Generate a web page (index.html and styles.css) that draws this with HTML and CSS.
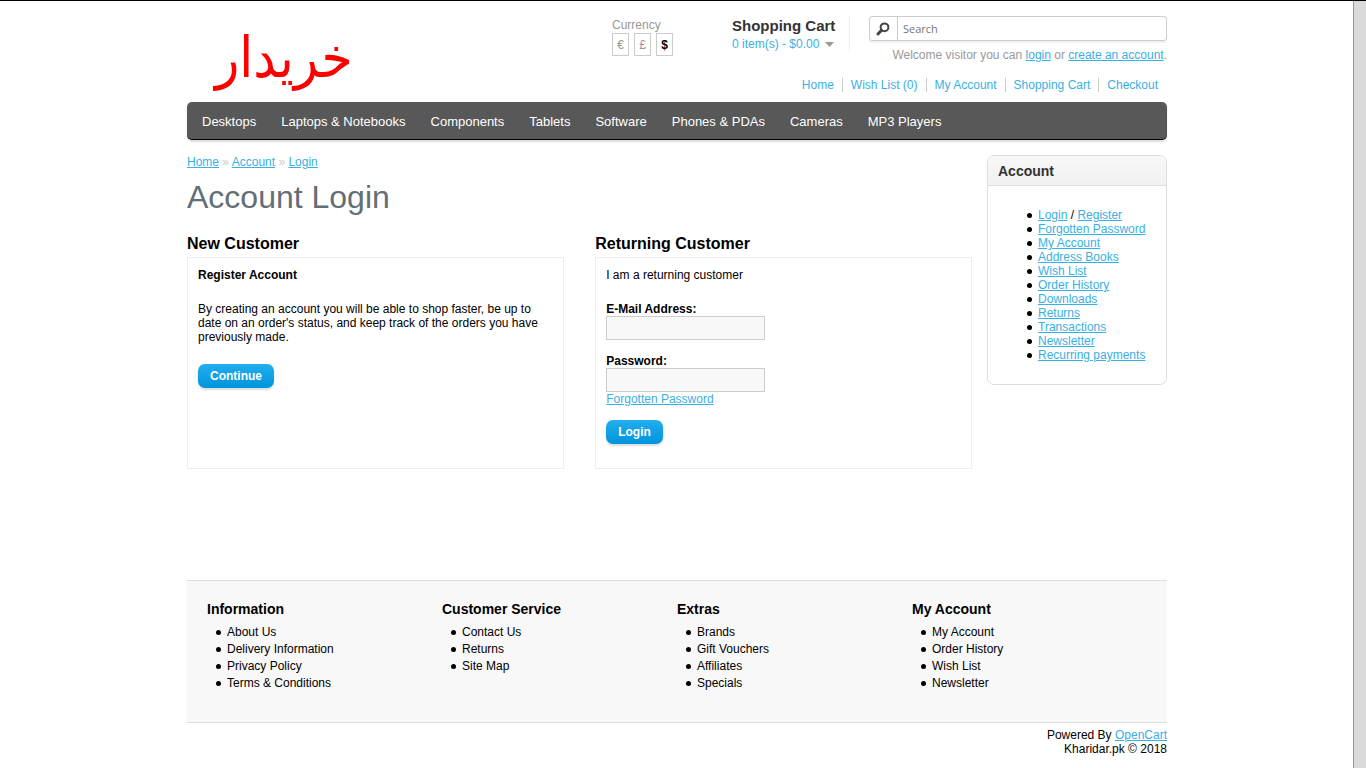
FILE: index.html
```html
<!DOCTYPE html>
<html lang="en">
<head>
<meta charset="utf-8">
<meta name="viewport" content="width=device-width, initial-scale=1">
<title>Account Login</title>
<link rel="stylesheet" href="styles.css">
</head>
<body>
<div class="viewport">
  <div class="container">
    <header class="header">
      <a class="logo" href="#" lang="ur" dir="rtl">خريدار</a>
      <form class="currency">
        <span class="currency-label">Currency</span>
        <div class="currency-options">
          <button type="button">€</button>
          <button type="button">£</button>
          <button type="button" class="active">$</button>
        </div>
      </form>
      <div class="cart">
        <h4>Shopping Cart</h4>
        <a href="#">0 item(s) - $0.00<svg class="caret" viewBox="0 0 9 5" aria-hidden="true"><path d="M0 0h9L4.500 5z" fill="#999"/></svg></a>
      </div>
      <div class="tools">
        <form class="search" role="search">
          <button type="button" aria-label="Search">
            <svg viewBox="0 0 14 14" aria-hidden="true"><circle cx="8.500" cy="5.300" r="3.900" fill="none" stroke="#444" stroke-width="2"/><path d="M5.500 8.300L2 12" stroke="#444" stroke-width="3" stroke-linecap="round"/></svg>
          </button>
          <input type="text" placeholder="Search" aria-label="Search">
        </form>
        <p class="welcome">Welcome visitor you can <a href="#">login</a> or <a href="#">create an account</a>.</p>
      </div>
      <nav class="links" aria-label="Account links">
        <a href="#">Home</a><a href="#">Wish List (0)</a><a href="#">My Account</a><a href="#">Shopping Cart</a><a href="#">Checkout</a>
      </nav>
    </header>

    <nav class="menu" aria-label="Categories">
      <a href="#">Desktops</a>
      <a href="#">Laptops &amp; Notebooks</a>
      <a href="#">Components</a>
      <a href="#">Tablets</a>
      <a href="#">Software</a>
      <a href="#">Phones &amp; PDAs</a>
      <a href="#">Cameras</a>
      <a href="#">MP3 Players</a>
    </nav>

    <div class="main">
      <main class="content">
        <div class="breadcrumb"><a href="#">Home</a> » <a href="#">Account</a> » <a href="#">Login</a></div>
        <h1>Account Login</h1>
        <div class="login">
          <section class="panel">
            <h2>New Customer</h2>
            <div class="panel-body">
              <p><b>Register Account</b></p>
              <p>By creating an account you will be able to shop faster, be up to date on an order's status, and keep track of the orders you have previously made.</p>
              <a class="button" href="#">Continue</a>
            </div>
          </section>
          <section class="panel">
            <h2>Returning Customer</h2>
            <form class="panel-body">
              <p>I am a returning customer</p>
              <div class="field">
                <label for="email">E-Mail Address:</label>
                <input id="email" type="text">
              </div>
              <div class="field">
                <label for="password">Password:</label>
                <input id="password" type="password">
                <a href="#">Forgotten Password</a>
              </div>
              <button class="button" type="button">Login</button>
            </form>
          </section>
        </div>
      </main>
      <aside class="box">
        <h3>Account</h3>
        <ul>
          <li><a href="#">Login</a> / <a href="#">Register</a></li>
          <li><a href="#">Forgotten Password</a></li>
          <li><a href="#">My Account</a></li>
          <li><a href="#">Address Books</a></li>
          <li><a href="#">Wish List</a></li>
          <li><a href="#">Order History</a></li>
          <li><a href="#">Downloads</a></li>
          <li><a href="#">Returns</a></li>
          <li><a href="#">Transactions</a></li>
          <li><a href="#">Newsletter</a></li>
          <li><a href="#">Recurring payments</a></li>
        </ul>
      </aside>
    </div>

    <footer class="footer">
      <div>
        <h3>Information</h3>
        <ul>
          <li><a href="#">About Us</a></li>
          <li><a href="#">Delivery Information</a></li>
          <li><a href="#">Privacy Policy</a></li>
          <li><a href="#">Terms &amp; Conditions</a></li>
        </ul>
      </div>
      <div>
        <h3>Customer Service</h3>
        <ul>
          <li><a href="#">Contact Us</a></li>
          <li><a href="#">Returns</a></li>
          <li><a href="#">Site Map</a></li>
        </ul>
      </div>
      <div>
        <h3>Extras</h3>
        <ul>
          <li><a href="#">Brands</a></li>
          <li><a href="#">Gift Vouchers</a></li>
          <li><a href="#">Affiliates</a></li>
          <li><a href="#">Specials</a></li>
        </ul>
      </div>
      <div>
        <h3>My Account</h3>
        <ul>
          <li><a href="#">My Account</a></li>
          <li><a href="#">Order History</a></li>
          <li><a href="#">Wish List</a></li>
          <li><a href="#">Newsletter</a></li>
        </ul>
      </div>
    </footer>
    <div class="powered">Powered By <a href="#">OpenCart</a><br>Kharidar.pk © 2018</div>
  </div>
</div>
<div class="rail" aria-hidden="true"></div>
</body>
</html>
```
FILE: styles.css
```css
* {
  box-sizing: border-box;
}

body {
  display: flex;
  min-height: 100vh;
  margin: 0;
  border-top: 1px solid #000;
  background: #fff;
  color: #000;
  font: 12px/14px "Liberation Sans", Arial, Helvetica, sans-serif;
}

h1, h2, h3, h4, p, ul {
  margin: 0;
  padding: 0;
}

ul {
  list-style: none;
}

li::before {
  content: "";
  display: inline-block;
  width: 5px;
  height: 5px;
  margin: 0 6px 0 -11px;
  border-radius: 50%;
  background: #000;
  vertical-align: 1px;
}

a {
  color: #38b0e3;
}

button, input {
  font: inherit;
}

.viewport {
  flex: 1;
}

.container {
  max-width: 980px;
  margin: 0 auto;
}

.rail {
  width: 12px;
  background: #dadada;
  box-shadow: -1px 0 #999;
}

/* Header */

.header {
  display: grid;
  grid-template-columns: 1fr 120px 118px 317px;
  grid-template-rows: 62px 24px;
  padding-top: 15px;
}

.logo {
  grid-row: 1 / 3;
  justify-self: start;
  padding: 12px 0 0 28px;
  color: #f00;
  font: 56px/60px "DejaVu Sans Condensed", "DejaVu Sans", sans-serif;
  text-decoration: none;
}

.currency {
  padding-top: 2px;
  color: #999;
}

.currency-label {
  display: block;
  margin-bottom: 1px;
}

.currency-options {
  display: flex;
  gap: 5px;
}

.currency button {
  width: 17px;
  height: 23px;
  padding: 0;
  border: 1px solid #ccc;
  background: #fff;
  color: #999;
}

.currency .active {
  color: #000;
  font-weight: bold;
}

.cart {
  height: 35px;
  padding-top: 1px;
  border-right: 1px solid #eee;
}

.cart h4 {
  margin-bottom: 2px;
  color: #333;
  font-size: 15px;
  line-height: 18px;
}

.cart a {
  display: flex;
  align-items: center;
  gap: 6px;
  text-decoration: none;
}

.caret {
  width: 9px;
  height: 5px;
}

.tools {
  display: flex;
  flex-direction: column;
  gap: 7px;
  padding-left: 19px;
}

.search {
  display: flex;
  height: 25px;
  border: 1px solid #ccc;
  border-radius: 3px;
  box-shadow: 0 2px #f0f0f0;
}

.search button {
  display: flex;
  align-items: center;
  width: 28px;
  padding: 0 6px;
  border: 0;
  border-right: 1px solid #ccc;
  background: none;
}

.search svg {
  width: 14px;
  height: 14px;
}

.search input {
  flex: 1;
  min-width: 0;
  padding: 0 5px;
  border: 0;
  background: none;
  font: 11px "Open Sans", sans-serif;
}

.welcome {
  color: #999;
  text-align: right;
}

.links {
  grid-column: 2 / 5;
  display: flex;
  justify-content: flex-end;
  align-items: start;
  padding-right: 1px;
}

.links a {
  padding: 0 8px;
  text-decoration: none;
}

.links a + a {
  border-left: 1px solid #ccc;
}

/* Category menu */

.menu {
  display: flex;
  flex-wrap: wrap;
  gap: 0 25px;
  margin-bottom: 15px;
  padding: 0 15px;
  border-bottom: 1px solid #000;
  border-radius: 5px;
  background: #585858;
  box-shadow: 0 2px 2px #ddd;
}

.menu a {
  padding: 13px 0 10px;
  color: #fff;
  font-size: 13px;
  text-decoration: none;
}

/* Main area */

.main {
  display: flex;
  align-items: start;
  gap: 15px;
}

.content {
  flex: 1;
  min-height: 425px;
}

.breadcrumb {
  margin-bottom: 10px;
  color: #ccc;
}

h1 {
  margin-bottom: 20px;
  color: #636e75;
  font-size: 32px;
  font-weight: normal;
  line-height: 36px;
}

h2 {
  margin-bottom: 4px;
  font-size: 16px;
  line-height: 18px;
}

.login {
  display: flex;
  justify-content: space-between;
}

.panel {
  display: flex;
  flex-direction: column;
  width: 48%;
}

.panel-body {
  flex: 1;
  padding: 10px 10px 24px;
  border: 1px solid #eee;
}

.panel-body p {
  margin-bottom: 20px;
}

.field {
  margin-bottom: 14px;
}

.field label {
  display: block;
  font-weight: bold;
}

.field input {
  display: block;
  width: 159px;
  height: 24px;
  padding: 3px;
  border: 1px solid #ccc;
  background: #f8f8f8;
}

.button {
  display: inline-block;
  padding: 5px 12px;
  border: 0;
  border-radius: 7px;
  background: linear-gradient(#23aeee, #0094db);
  box-shadow: 0 2px 2px #ddd;
  color: #fff;
  font-weight: bold;
  text-decoration: none;
}

.box {
  width: 180px;
  border: 1px solid #dbdee1;
  border-radius: 7px;
  overflow: hidden;
}

.box h3 {
  padding: 7px 10px 6px;
  border-bottom: 1px solid #dbdee1;
  background: linear-gradient(#f8f8f8, #f1f1f1);
  color: #333;
  font-size: 14px;
  line-height: 16px;
}

.box ul {
  padding: 22px 0 22px 50px;
}

/* Footer */

.footer {
  display: grid;
  grid-template-columns: repeat(4, 1fr);
  padding: 20px 20px 29px;
  border-top: 1px solid #ddd;
  border-bottom: 1px solid #ddd;
  background: #f8f8f8;
}

.footer h3 {
  margin-bottom: 8px;
  font-size: 14px;
  line-height: 16px;
}

.footer ul {
  padding-left: 20px;
}

.footer li {
  padding-bottom: 3px;
}

.footer a {
  color: #000;
  text-decoration: none;
}

.powered {
  padding: 5px 0;
  text-align: right;
}
```
